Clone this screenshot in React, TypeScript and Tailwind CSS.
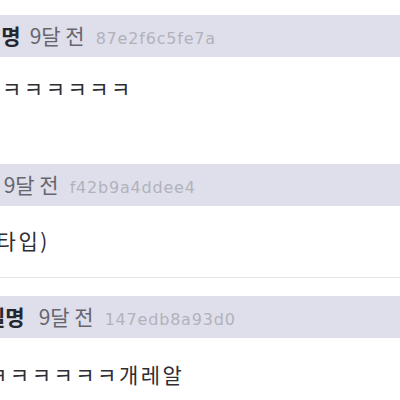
import React from 'react';

type Comment = {
  name: string;
  ago: string;
  hash: string;
  body: string;
  offset: string; // row is shifted off the left edge in the capture
  agoGap: string;
  bodyOffset: string;
  bodyPad: string;
  bodyHeight: string;
};

const comments: Comment[] = [
  {
    name: '익명', ago: '9달 전', hash: '87e2f6c5fe7a', body: 'ㅋㅋㅋㅋㅋㅋ',
    offset: 'ml-[-18px]', agoGap: 'ml-[9px]', bodyOffset: 'ml-[2px]', bodyPad: 'pt-[16px]', bodyHeight: 'h-[107px]',
  },
  {
    name: '익명', ago: '9달 전', hash: 'f42b9a4ddee4', body: '(타입)',
    offset: 'ml-[-44px]', agoGap: 'ml-[9px]', bodyOffset: 'ml-[-13px]', bodyPad: 'pt-[19px]', bodyHeight: 'h-[71px]',
  },
  {
    name: '실명', ago: '9달 전', hash: '147edb8a93d0', body: 'ㅋㅋㅋㅋㅋㅋ개레알',
    offset: 'ml-[-14px]', agoGap: 'ml-[14px]', bodyOffset: 'ml-[-12px]', bodyPad: 'pt-[21px]', bodyHeight: 'h-[60px]',
  },
];

function CommentBlock({ c }: { c: Comment }) {
  return (
    <div>
      <div className="h-[42px] bg-[#dedfeb] flex items-center overflow-hidden">
        <div className={`flex items-baseline whitespace-nowrap ${c.offset}`}>
          <span className="text-[21px] font-bold text-[#26262e]">{c.name}</span>
          <span className={`${c.agoGap} text-[21px] text-[#66666e]`}>{c.ago}</span>
          <span className="ml-[11px] text-[16px] text-[#b2b2ba] font-['DejaVu_Sans',sans-serif] tracking-[0.8px]">{c.hash}</span>
        </div>
      </div>
      <div className={`${c.bodyHeight} ${c.bodyPad} overflow-hidden`}>
        <div className={`text-[21px] text-[#2e2e33] tracking-[2.5px] whitespace-nowrap ${c.bodyOffset}`}>{c.body}</div>
      </div>
    </div>
  );
}

export default function App() {
  return (
    <div className="w-[400px] h-[400px] bg-white overflow-hidden font-['Noto_Sans_CJK_KR','Noto_Sans',sans-serif] pt-[15px]">
      <CommentBlock c={comments[0]} />
      <CommentBlock c={comments[1]} />
      <div className="border-t border-[#e4e4e8] pt-[18px]">
        <CommentBlock c={comments[2]} />
      </div>
    </div>
  );
}
